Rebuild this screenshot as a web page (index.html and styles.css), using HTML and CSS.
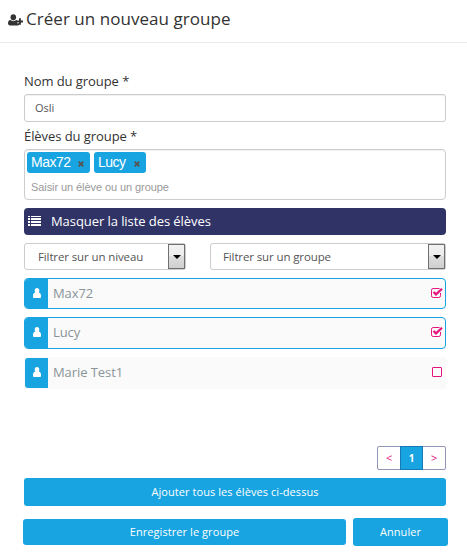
FILE: index.html
```html
<!DOCTYPE html>
<html lang="fr">
<head>
<meta charset="utf-8">
<title>Créer un nouveau groupe</title>
<link rel="stylesheet" href="styles.css">
</head>
<body>
<svg width="0" height="0" class="defs">
  <symbol id="user" viewBox="0 0 8 10"><path d="M4 0C5.5 0 6.3 1 6.3 2.4C6.3 3.4 6 4.2 5.8 4.5C7.5 4.9 8 6 8 8.2C8 9.6 7.7 10 7 10H1C.3 10 0 9.6 0 8.2C0 6 .5 4.9 2.2 4.5C2 4.2 1.7 3.4 1.7 2.4C1.7 1 2.5 0 4 0Z"/></symbol>
  <symbol id="checked" viewBox="0 0 12 11"><path d="M9.5 6V8.7Q9.5 10.5 7.8 10.5H2.2Q.5 10.5.5 8.8V3.2Q.5 1.5 2.2 1.5H8.5" fill="none" stroke="currentColor"/><path d="M2.5 5L5 7.4L11 1.7" fill="none" stroke="currentColor" stroke-width="2.2"/></symbol>
</svg>
<header class="header">
  <svg class="title-icon" width="15" height="12" viewBox="0 0 15 12"><path d="M5.3.3C7 .3 8.1 1.5 8.1 3.3S7 6.4 5.3 6.4S2.5 5.1 2.5 3.3S3.6.3 5.3.3Z"/><path d="M2.4 6C4 7.5 6.7 7.5 8.3 6L9 6.3V9.2H11V11.1Q10.7 11.4 9.6 11.4H1.7Q0 11.4 0 9.6C0 7.6.7 6.1 2.4 6Z"/><path d="M11 4.3H12.9V6.5H15V8.4H12.9V10.7H11V8.4H8.9V6.5H11Z"/></svg>
  <h1>Créer un nouveau groupe</h1>
</header>
<main class="form">
  <label class="label" for="name">Nom du groupe *</label>
  <input class="field" id="name" value="Osli">
  <div class="label label-students">Élèves du groupe *</div>
  <div class="tags">
    <div class="tag-list">
      <span class="tag tag-max">Max72<svg width="6" height="6" viewBox="0 0 6 6"><path d="M.7.7L5.3 5.3M5.3.7L.7 5.3"/></svg></span>
      <span class="tag tag-lucy">Lucy<svg width="6" height="6" viewBox="0 0 6 6"><path d="M.7.7L5.3 5.3M5.3.7L.7 5.3"/></svg></span>
    </div>
    <div class="hint">Saisir un élève ou un groupe</div>
  </div>
  <div class="toggle">
    <svg width="13" height="10" viewBox="0 0 13 10" shape-rendering="crispEdges"><path d="M0 0h2v1H0zM3 0h10v1H3zM0 2h2v2H0zM3 2h10v2H3zM0 5h2v2H0zM3 5h10v2H3zM0 8h2v2H0zM3 8h10v2H3z"/></svg>
    <span>Masquer la liste des élèves</span>
  </div>
  <div class="filters">
    <div class="select select-level"><span>Filtrer sur un niveau</span><i class="arrow"></i></div>
    <div class="select select-group"><span>Filtrer sur un groupe</span><i class="arrow"></i></div>
  </div>
  <div class="row selected"><div class="avatar"><svg width="8" height="10"><use href="#user"/></svg></div><span>Max72</span><svg class="check" width="12" height="11"><use href="#checked"/></svg></div>
  <div class="row selected tall"><div class="avatar"><svg width="8" height="10"><use href="#user"/></svg></div><span>Lucy</span><svg class="check" width="12" height="11"><use href="#checked"/></svg></div>
  <div class="row tall"><div class="avatar"><svg width="8" height="10"><use href="#user"/></svg></div><span>Marie Test1</span><i class="box"></i></div>
  <nav class="pages"><a>&lt;</a><a class="current">1</a><a>&gt;</a></nav>
  <button class="button add">Ajouter tous les élèves ci-dessus</button>
  <div class="actions">
    <button class="button save">Enregistrer le groupe</button>
    <button class="button cancel">Annuler</button>
  </div>
</main>
</body>
</html>
```
FILE: styles.css
```css
* { box-sizing: border-box; }
body { margin: 0; background: #fff; color: #333; font: 13px/18px "Open Sans", sans-serif; letter-spacing: -.07px; }
.defs { display: block; height: 0; }
.header { display: flex; height: 43px; padding: 7px 0 0 8px; border-bottom: 1px solid #eaeaea; }
.title-icon { margin-top: 7px; fill: #333; }
h1 { margin: 0 0 0 3px; font-size: 17px; font-weight: 400; line-height: 23px; letter-spacing: .04px; white-space: nowrap; }
.form { width: 422px; margin-left: 24px; padding-top: 29px; }
.label { display: block; height: 22px; line-height: 18px; }
.field { display: block; width: 422px; height: 28px; padding: 0 10px 2px; border: 1px solid #ccc; border-radius: 3px; color: #555; font: 11px "Open Sans", sans-serif; box-shadow: inset 0 1px 1px rgba(0,0,0,.06); }
.label-students { margin-top: 5px; }
.tags { height: 51px; padding: 2px; border: 1px solid #ccc; border-radius: 4px; box-shadow: inset 0 1px 1px rgba(0,0,0,.06); }
.tag-list { display: flex; gap: 4px; }
.tag { display: flex; align-items: center; justify-content: space-between; height: 21px; padding: 0 6px 1px 4px; border-radius: 3px; background: #18a4e1; color: #fff; font: 14px "Liberation Sans", sans-serif; letter-spacing: -.5px; }
.tag svg { margin-top: 3px; stroke: #555; stroke-width: 1.9; }
.tag-max { width: 63px; }
.tag-lucy { width: 52px; }
.hint { margin: 8px 0 0 4px; color: #999; font: 11px/13px "Liberation Sans", sans-serif; letter-spacing: -.08px; }
.toggle { display: flex; align-items: center; height: 27px; margin-top: 8px; padding-left: 4px; border-radius: 4px; background: #303366; color: #fff; }
.toggle svg { margin-top: -1px; margin-right: 10px; fill: #fff; }
.toggle span { margin-top: -2px; }
.filters { display: flex; justify-content: space-between; margin-top: 8px; }
.select { display: flex; align-items: center; justify-content: space-between; height: 27px; padding-left: 13px; border: 1px solid #ccc; border-radius: 3px; color: #555; font-size: 11.5px; letter-spacing: -.12px; }
.select-level { width: 162px; }
.select-group { width: 236px; padding-left: 12px; }
.arrow { display: flex; align-items: center; justify-content: center; width: 17px; height: 25px; border: 1px solid #707070; background: linear-gradient(#f2f2f2, #ebebeb 50%, #ddd 50%, #cfcfcf); }
.arrow::after { content: ""; border: 4px solid transparent; border-top-color: #000; border-bottom: 0; }
.row { display: flex; align-items: center; height: 31px; margin-top: 8px; padding-right: 4px; border: 1px solid #fafafa; background: #fafafa; color: #8a9499; }
.row span { margin-top: -2px; }
.tall { height: 32px; }
.selected { padding-right: 2px; border-color: #18a4e1; border-radius: 4px; }
.avatar { display: flex; align-items: center; justify-content: center; width: 23px; height: 100%; margin-right: 5px; padding-left: 1px; border-radius: 3px 0 0 3px; background: #18a4e1; fill: #fff; }
.avatar svg { margin-top: -2px; }
.check, .box { margin-left: auto; color: #e6127d; }
.check { margin-top: -2px; }
.tall .check { margin-top: -3px; }
.box { width: 10px; height: 10px; margin-top: -2px; margin-right: -1px; border: 1px solid #e6127d; border-radius: 1px; }
.pages { display: flex; width: 69px; height: 24px; margin: 57px 0 0 auto; border: 1px solid #9294b5; border-radius: 2px; color: #e6127d; font-size: 11px; line-height: 22px; text-align: center; }
.pages a { flex: 1; }
.pages .current { flex: 0 0 23px; height: 24px; margin-top: -1px; border: 1px solid #1878b3; background: #18a4e1; color: #fff; font-size: 10px; font-weight: 700; }
.button { display: block; padding: 0 0 1px; border: 0; border-radius: 3px; background: #18a4e1; color: #fff; font: 11px/15px "Open Sans", sans-serif; letter-spacing: .07px; text-align: center; }
.add { width: 422px; height: 28px; margin-top: 8px; }
.actions { display: flex; align-items: center; justify-content: space-between; width: 425px; margin: 12px 0 0 -1px; }
.save { width: 323px; height: 26px; }
.cancel { width: 95px; height: 28px; }
```
